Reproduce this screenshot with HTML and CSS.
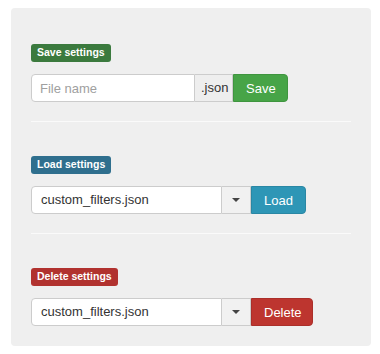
FILE: index.html
```html
<!DOCTYPE html>
<html>
<head>
<meta charset="utf-8">
<link rel="stylesheet" href="styles.css">
</head>
<body>
<div class="panel">
  <section class="group">
    <span class="tag tag-save">Save settings</span>
    <div class="row">
      <input class="field field-save" type="text" placeholder="File name">
      <span class="addon">.json</span>
      <button class="btn btn-save">Save</button>
    </div>
  </section>
  <hr class="sep">
  <section class="group">
    <span class="tag tag-load">Load settings</span>
    <div class="row">
      <div class="field field-select">custom_filters.json</div>
      <span class="drop"><span class="caret"></span></span>
      <button class="btn btn-load">Load</button>
    </div>
  </section>
  <hr class="sep">
  <section class="group">
    <span class="tag tag-delete">Delete settings</span>
    <div class="row">
      <div class="field field-select">custom_filters.json</div>
      <span class="drop"><span class="caret"></span></span>
      <button class="btn btn-delete">Delete</button>
    </div>
  </section>
</div>
</body>
</html>
```

FILE: styles.css
```css
html, body {
  margin: 0;
  padding: 0;
  background: #ffffff;
  font-family: "Liberation Sans", Arial, sans-serif;
}
body {
  padding: 8px 9px 8px 11px;
}
.panel {
  width: 360px;
  height: 338px;
  box-sizing: border-box;
  background: #efefef;
  border-radius: 4px;
  padding: 36px 20px 20px 20px;
  display: flex;
  flex-direction: column;
}
.group {
  display: flex;
  flex-direction: column;
  align-items: flex-start;
  gap: 12px;
}
.tag {
  display: inline-block;
  font-size: 10.5px;
  font-weight: bold;
  line-height: 11px;
  padding: 3px 6px 4px;
  color: #ffffff;
  border-radius: 3px;
}
.tag-save { background: #3b7a3e; }
.tag-load { background: #2f6f8e; }
.tag-delete { background: #b1322f; }
.row {
  display: flex;
  height: 28px;
}
.field {
  box-sizing: border-box;
  height: 28px;
  border: 1px solid #cccccc;
  border-radius: 4px 0 0 4px;
  background: #ffffff;
  font-family: "Liberation Sans", Arial, sans-serif;
  font-size: 13px;
  color: #333333;
  margin: 0;
  outline: none;
}
.field-save {
  width: 164px;
  padding: 0 8px;
}
.field-save::placeholder { color: #a0a0a0; }
.field-select {
  width: 191px;
  padding: 0 9px;
  line-height: 26px;
}
.addon {
  box-sizing: border-box;
  width: 38px;
  height: 28px;
  border: 1px solid #cccccc;
  border-left: 0;
  background: #eeeeee;
  font-size: 13px;
  line-height: 26px;
  color: #333333;
  padding-left: 6px;
}
.drop {
  box-sizing: border-box;
  width: 29px;
  height: 28px;
  border: 1px solid #cccccc;
  border-left: 0;
  background: #f1f1f1;
  display: flex;
  align-items: center;
  justify-content: center;
}
.caret {
  width: 0;
  height: 0;
  border-left: 4px solid transparent;
  border-right: 4px solid transparent;
  border-top: 4px solid #444444;
}
.btn {
  box-sizing: border-box;
  height: 28px;
  border: 1px solid transparent;
  border-radius: 0 4px 4px 0;
  padding: 0 12px;
  font-family: "Liberation Sans", Arial, sans-serif;
  font-size: 13px;
  color: #ffffff;
  margin: 0;
}
.btn-save { background: #47a447; border-color: #3f953f; width: 55px; }
.btn-load { background: #2e96b6; border-color: #2a87a4; width: 55px; }
.btn-delete { background: #bd352f; border-color: #ab2f2a; width: 62px; }
.sep {
  border: 0;
  height: 1px;
  background: #fafafa;
  margin: 19px 0 34px 0;
}
```
